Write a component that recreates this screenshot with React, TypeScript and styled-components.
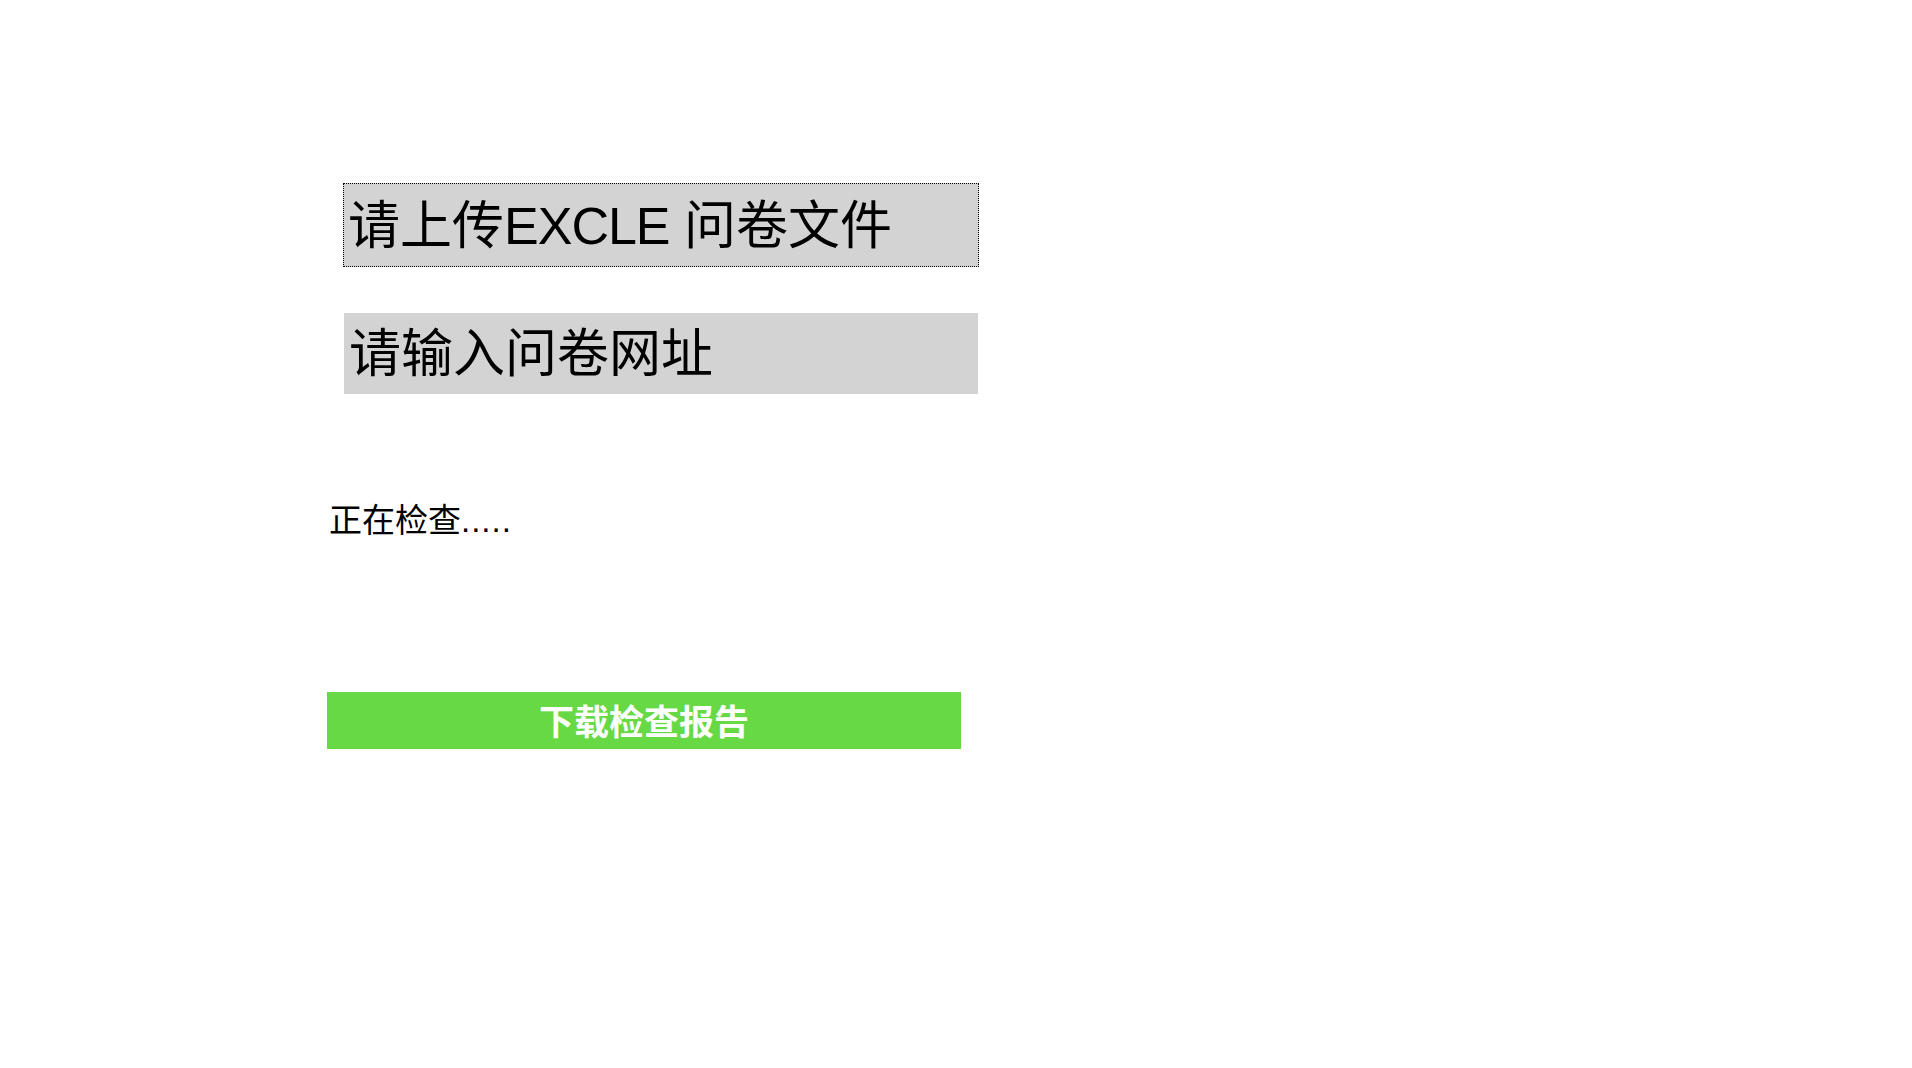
import React from "react";
import styled, { createGlobalStyle } from "styled-components";

const GlobalStyle = createGlobalStyle`
  html, body {
    margin: 0;
    padding: 0;
    background: #ffffff;
  }
  body {
    font-family: "Liberation Sans", "Noto Sans CJK SC", sans-serif;
    color: #000000;
  }
`;

const Page = styled.div`
  display: flex;
  flex-direction: column;
  align-items: flex-start;
  padding: 183px 0 0 327px;
  min-height: 100vh;
  box-sizing: border-box;
`;

const InputBox = styled.div<{ $dotted?: boolean }>`
  display: flex;
  align-items: center;
  box-sizing: border-box;
  width: ${(p) => (p.$dotted ? "636px" : "634px")};
  height: ${(p) => (p.$dotted ? "84px" : "81px")};
  margin-left: ${(p) => (p.$dotted ? "16px" : "17px")};
  padding-left: ${(p) => (p.$dotted ? "4px" : "5px")};
  padding-top: ${(p) => (p.$dotted ? "2px" : "0")};
  background: #d3d3d3;
  border: ${(p) => (p.$dotted ? "1px dotted #000" : "none")};
  font-size: 52px;
  line-height: 1;
  white-space: pre;
  cursor: pointer;
`;

const Latin = styled.span`
  letter-spacing: -1px;
`;

const Spacer = styled.div<{ $h: number }>`
  height: ${(p) => p.$h}px;
`;

const Status = styled.div`
  font-size: 33px;
  line-height: 40px;
  padding-left: 2px;
  white-space: nowrap;
`;

const Dots = styled.span`
  letter-spacing: 1px;
`;

const DownloadButton = styled.button`
  display: flex;
  align-items: center;
  justify-content: center;
  width: 634px;
  height: 57px;
  border: none;
  padding: 0 0 3px 0;
  margin: 0;
  background: #66d944;
  color: #ffffff;
  font-family: "Liberation Sans", "Noto Sans CJK SC", sans-serif;
  font-size: 35px;
  font-weight: 700;
  cursor: pointer;
`;

export default function App() {
  return (
    <>
      <GlobalStyle />
      <Page>
        <InputBox $dotted>
          <span>
            请上传<Latin>EXCLE</Latin>
            {" 问卷文件"}
          </span>
        </InputBox>
        <Spacer $h={46} />
        <InputBox>请输入问卷网址</InputBox>
        <Spacer $h={107} />
        <Status>
          正在检查<Dots>.....</Dots>
        </Status>
        <Spacer $h={151} />
        <DownloadButton>下载检查报告</DownloadButton>
      </Page>
    </>
  );
}
